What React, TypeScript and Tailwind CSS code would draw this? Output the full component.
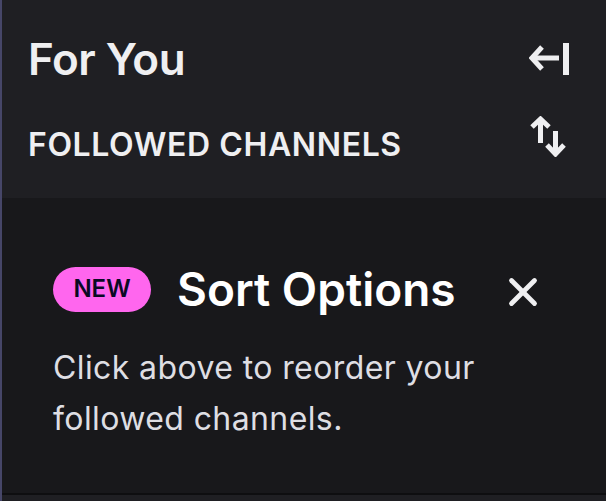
import { X } from "lucide-react";

function CollapseIcon() {
  return (
    <svg width="41" height="34" viewBox="0 0 41 34" fill="none" stroke="#efeff1" strokeWidth="5">
      <path d="M13 5 L3 16 L13 27" />
      <path d="M4 16 H30" />
      <path d="M37 1 V33" strokeWidth="6" />
    </svg>
  );
}

function SortIcon() {
  return (
    <svg width="36" height="41" viewBox="0 0 36 41" fill="none" stroke="#efeff1" strokeWidth="5">
      <path d="M2 11 L10.5 3 L19 11" />
      <path d="M10.5 4 V27" />
      <path d="M17 29 L25.5 38 L34 29" />
      <path d="M25.5 15 V37" />
    </svg>
  );
}

export default function App() {
  return (
    <div className="flex flex-col w-[606px] h-[501px] overflow-hidden border-l-2 border-[#464668] bg-[#1f1f23] font-['Inter',sans-serif]">
      <div className="h-[198px] shrink-0 pl-[26px] pr-[36px]">
        <div className="flex items-center justify-between pt-[33px]">
          <h1 className="text-[44px] leading-[52px] font-semibold tracking-[-0.5px] text-[#efeff1]">For You</h1>
          <CollapseIcon />
        </div>
        <div className="flex items-start justify-between pt-[41px]">
          <h2 className="text-[32px] leading-[38px] font-semibold tracking-[0.6px] text-[#efeff1]">FOLLOWED CHANNELS</h2>
          <div className="-mt-[10px] mr-[4px]">
            <SortIcon />
          </div>
        </div>
      </div>
      <div className="flex-1 bg-[#18181b] pl-[51px] pt-[64px]">
        <div className="flex items-center">
          <span className="flex items-center justify-center w-[98px] h-[45px] rounded-full bg-[#ff66ee] text-[24px] font-semibold text-[#0a0a24]">NEW</span>
          <h3 className="ml-[26px] text-[46px] leading-[54px] font-semibold text-white">Sort Options</h3>
          <X className="ml-[44px] mt-[6px] text-[#efeff1]" size={46} strokeWidth={2.5} />
        </div>
        <p className="mt-[26px] w-[470px] text-[32px] leading-[51px] tracking-[0.4px] text-[#dedee3]">Click above to reorder your followed channels.</p>
      </div>
      <div className="h-[8px] shrink-0 border-t-2 border-[#0e0e10] bg-[#1f1f23]" />
    </div>
  );
}
